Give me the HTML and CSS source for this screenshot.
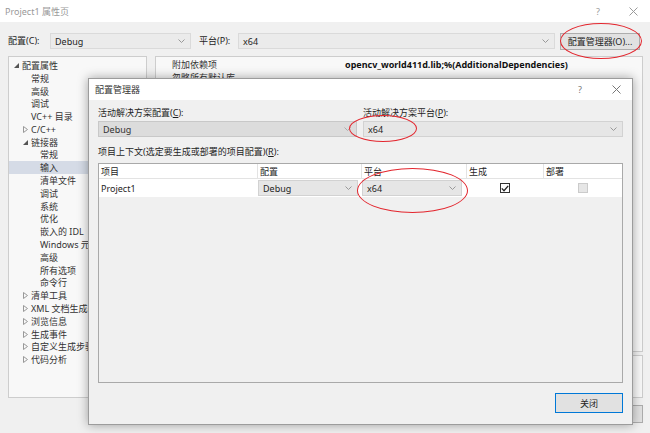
FILE: index.html
```html
<!doctype html>
<html lang="zh-CN">
<head>
  <meta charset="UTF-8">
  <title>Project1 属性页</title>
  <link rel="stylesheet" href="styles.css">
</head>
<body>
<div class="window">

  <div class="titlebar">
    <span class="title">Project1 属性页</span>
    <span class="tb-help">?</span>
    <span class="tb-close"><svg width="9" height="9" viewBox="0 0 9 9"><path d="M0.5 0.5 L8.5 8.5 M8.5 0.5 L0.5 8.5" stroke="#9a9a9a" stroke-width="1"/></svg></span>
  </div>

  <div class="toolbar">
    <span class="lbl lbl-cfg">配置(C):</span>
    <div class="combo combo-cfg"><span>Debug</span><svg width="7" height="4" viewBox="0 0 7 4"><path d="M0.5 0.5 L3.5 3.5 L6.5 0.5" fill="none" stroke="#999"/></svg></div>
    <span class="lbl lbl-plat">平台(P):</span>
    <div class="combo combo-plat"><span>x64</span><svg width="7" height="4" viewBox="0 0 7 4"><path d="M0.5 0.5 L3.5 3.5 L6.5 0.5" fill="none" stroke="#999"/></svg></div>
    <button class="btn btn-mgr">配置管理器(O)...</button>
  </div>

  <div class="main">
    <div class="tree">
      <div class="row l0"><span class="tw"><svg width="5" height="5" viewBox="0 0 5 5"><path d="M5 0 L5 5 L0 5Z" fill="#555"/></svg></span>配置属性</div>
      <div class="row l1"><span class="tw"></span>常规</div>
      <div class="row l1"><span class="tw"></span>高级</div>
      <div class="row l1"><span class="tw"></span>调试</div>
      <div class="row l1"><span class="tw"></span>VC++ 目录</div>
      <div class="row l1"><span class="tw"><svg width="5" height="7" viewBox="0 0 5 7"><path d="M0.5 0.5 L4.5 3.5 L0.5 6.5Z" fill="none" stroke="#999"/></svg></span>C/C++</div>
      <div class="row l1"><span class="tw"><svg width="5" height="5" viewBox="0 0 5 5"><path d="M5 0 L5 5 L0 5Z" fill="#555"/></svg></span>链接器</div>
      <div class="row l2"><span class="tw"></span>常规</div>
      <div class="row l2 selected"><span class="tw"></span>输入</div>
      <div class="row l2"><span class="tw"></span>清单文件</div>
      <div class="row l2"><span class="tw"></span>调试</div>
      <div class="row l2"><span class="tw"></span>系统</div>
      <div class="row l2"><span class="tw"></span>优化</div>
      <div class="row l2"><span class="tw"></span>嵌入的 IDL</div>
      <div class="row l2"><span class="tw"></span>Windows 元数据</div>
      <div class="row l2"><span class="tw"></span>高级</div>
      <div class="row l2"><span class="tw"></span>所有选项</div>
      <div class="row l2"><span class="tw"></span>命令行</div>
      <div class="row l1"><span class="tw"><svg width="5" height="7" viewBox="0 0 5 7"><path d="M0.5 0.5 L4.5 3.5 L0.5 6.5Z" fill="none" stroke="#999"/></svg></span>清单工具</div>
      <div class="row l1"><span class="tw"><svg width="5" height="7" viewBox="0 0 5 7"><path d="M0.5 0.5 L4.5 3.5 L0.5 6.5Z" fill="none" stroke="#999"/></svg></span>XML 文档生成器</div>
      <div class="row l1"><span class="tw"><svg width="5" height="7" viewBox="0 0 5 7"><path d="M0.5 0.5 L4.5 3.5 L0.5 6.5Z" fill="none" stroke="#999"/></svg></span>浏览信息</div>
      <div class="row l1"><span class="tw"><svg width="5" height="7" viewBox="0 0 5 7"><path d="M0.5 0.5 L4.5 3.5 L0.5 6.5Z" fill="none" stroke="#999"/></svg></span>生成事件</div>
      <div class="row l1"><span class="tw"><svg width="5" height="7" viewBox="0 0 5 7"><path d="M0.5 0.5 L4.5 3.5 L0.5 6.5Z" fill="none" stroke="#999"/></svg></span>自定义生成步骤</div>
      <div class="row l1"><span class="tw"><svg width="5" height="7" viewBox="0 0 5 7"><path d="M0.5 0.5 L4.5 3.5 L0.5 6.5Z" fill="none" stroke="#999"/></svg></span>代码分析</div>
    </div>

    <div class="right">
      <div class="props">
        <div class="prop"><span>附加依赖项</span><b>opencv_world411d.lib;%(AdditionalDependencies)</b></div>
        <div class="prop"><span>忽略所有默认库</span><span></span></div>
      </div>
      <div class="desc"></div>
    </div>
  </div>

  <div class="footer">
    <button class="btn">确定</button>
    <button class="btn">取消</button>
    <button class="btn">应用(A)</button>
  </div>

  <!-- 配置管理器 dialog -->
  <div class="dialog">
    <div class="dlg-title">
      <span class="title">配置管理器</span>
      <span class="tb-help">?</span>
      <span class="tb-close"><svg width="9" height="9" viewBox="0 0 9 9"><path d="M0.5 0.5 L8.5 8.5 M8.5 0.5 L0.5 8.5" stroke="#777" stroke-width="1"/></svg></span>
    </div>
    <div class="dlg-body">
      <div class="dlg-top">
        <div class="field">
          <span class="lbl">活动解决方案配置(<u>C</u>):</span>
          <div class="combo combo-disabled"><span>Debug</span><svg width="7" height="4" viewBox="0 0 7 4"><path d="M0.5 0.5 L3.5 3.5 L6.5 0.5" fill="none" stroke="#aaa"/></svg></div>
        </div>
        <div class="field">
          <span class="lbl">活动解决方案平台(<u>P</u>):</span>
          <div class="combo"><span>x64</span><svg width="7" height="4" viewBox="0 0 7 4"><path d="M0.5 0.5 L3.5 3.5 L6.5 0.5" fill="none" stroke="#999"/></svg></div>
        </div>
      </div>
      <span class="lbl ctx-lbl">项目上下文(选定要生成或部署的项目配置)(<u>R</u>):</span>
      <div class="grid">
        <div class="grid-row head">
          <div class="cell">项目</div>
          <div class="cell">配置</div>
          <div class="cell">平台</div>
          <div class="cell">生成</div>
          <div class="cell">部署</div>
        </div>
        <div class="grid-row data">
          <div class="cell">Project1</div>
          <div class="cell"><div class="combo"><span>Debug</span><svg width="7" height="4" viewBox="0 0 7 4"><path d="M0.5 0.5 L3.5 3.5 L6.5 0.5" fill="none" stroke="#999"/></svg></div></div>
          <div class="cell"><div class="combo"><span>x64</span><svg width="7" height="4" viewBox="0 0 7 4"><path d="M0.5 0.5 L3.5 3.5 L6.5 0.5" fill="none" stroke="#999"/></svg></div></div>
          <div class="cell center"><span class="check"><svg width="8" height="7" viewBox="0 0 8 7"><path d="M0.8 3.4 L3 5.7 L7.2 0.8" fill="none" stroke="#222" stroke-width="1.3"/></svg></span></div>
          <div class="cell center"><span class="check off"></span></div>
        </div>
      </div>
      <div class="dlg-foot">
        <button class="btn btn-close">关闭</button>
      </div>
    </div>
  </div>

  <!-- red annotation rings -->
  <span class="ring ring-mgr"></span>
  <span class="ring ring-plat"></span>
  <span class="ring ring-row"></span>

</div>
</body>
</html>
```

FILE: styles.css
```css
*
{
  margin: 0;
  padding: 0;
  box-sizing: border-box;
}
body
{
  width: 650px;
  height: 433px;
  overflow: hidden;
  background: #f0f0f0;
  font-family: "Noto Sans", "Noto Sans CJK SC", sans-serif;
  font-size: 9px;
  color: #1e1e1e;
}
.window
{
  position: relative;
  width: 650px;
  height: 433px;
  display: flex;
  flex-direction: column;
  background: #f0f0f0;
}
.titlebar
{
  height: 22px;
  flex: none;
  display: flex;
  align-items: center;
  padding: 0 10px 0 5px;
  background: #fff;
  color: #999;
}
.titlebar .title
{
  flex: 1;
}
.tb-help
{
  width: 12px;
  text-align: center;
  color: #999;
}
.tb-close
{
  width: 14px;
  margin-left: 22px;
  display: flex;
  justify-content: center;
}

/* toolbar */
.toolbar
{
  height: 34px;
  flex: none;
  display: flex;
  align-items: flex-start;
  padding: 11px 10px 0 8px;
}
.toolbar .lbl
{
  height: 16px;
  line-height: 16px;
}
.lbl-cfg
{
  width: 42px;
}
.lbl-plat
{
  width: 39px;
  margin-left: 8px;
}
.combo
{
  display: flex;
  align-items: center;
  justify-content: space-between;
  height: 16px;
  padding: 0 5px 0 4px;
  background: #e6e6e6;
  border: 1px solid #d2d2d2;
}
.combo-cfg
{
  width: 141px;
  background: #ebebeb;
  border-color: #dadada;
}
.combo-plat
{
  flex: 1;
  background: #ebebeb;
  border-color: #dadada;
}
.btn
{
  font: inherit;
  color: #1e1e1e;
  background: #e1e1e1;
  border: 1px solid #adadad;
}
.btn-mgr
{
  width: 80px;
  height: 17px;
  margin-left: 5px;
}

/* main area */
.main
{
  height: 342px;
  flex: none;
  display: flex;
  gap: 8px;
  padding: 0 7px 0 8px;
}
.tree
{
  width: 139px;
  padding-top: 2px;
  background: #f8f8f8;
  border: 1px solid #cdcdcd;
  overflow: hidden;
  white-space: nowrap;
}
.row
{
  display: flex;
  align-items: center;
  height: 12.8px;
  color: #333;
}
.row .tw
{
  width: 8px;
  flex: none;
  display: flex;
  align-items: center;
}
.l0
{
  padding-left: 5px;
}
.l1
{
  padding-left: 14px;
}
.l2
{
  padding-left: 23px;
}
.row.selected
{
  background: #d5dbe6;
}
.right
{
  flex: 1;
  display: flex;
  flex-direction: column;
  gap: 3px;
}
.props
{
  height: 296px;
  padding: 2px 0 0 16px;
  background: #f8f8f8;
  border: 1px solid #cdcdcd;
}
.prop
{
  display: grid;
  grid-template-columns: 173px 1fr;
  height: 12.8px;
  line-height: 12.8px;
  white-space: nowrap;
  color: #333;
}
.prop b
{
  color: #111;
}
.desc
{
  flex: 1;
  background: #f8f8f8;
  border: 1px solid #cdcdcd;
}
.footer
{
  display: flex;
  justify-content: flex-end;
  gap: 7px;
  padding: 7px 7px 0 0;
}
.footer .btn
{
  width: 70px;
  height: 18px;
}

/* dialog */
.dialog
{
  position: absolute;
  left: 88px;
  top: 78px;
  width: 545px;
  height: 347px;
  display: flex;
  flex-direction: column;
  background: #f0f0f0;
  border: 1px solid #9c9c9c;
  box-shadow: 0 0 10px rgba(0, 0, 0, 0.35);
  z-index: 10;
}
.dlg-title
{
  height: 21px;
  flex: none;
  display: flex;
  align-items: center;
  padding: 0 9px 0 6px;
  background: #fff;
  color: #333;
}
.dlg-title .title
{
  flex: 1;
}
.dlg-title .tb-help
{
  color: #777;
}
.dlg-title .tb-close
{
  margin-left: 23px;
}
.dlg-body
{
  flex: 1;
  display: flex;
  flex-direction: column;
  padding: 6px 9px 10px 9px;
}
.dlg-top
{
  display: grid;
  grid-template-columns: 259px 1fr;
  gap: 6px;
}
.field .lbl
{
  display: block;
  height: 13px;
  line-height: 13px;
}
.field .combo
{
  margin-top: 2px;
}
.combo-disabled
{
  background: #dcdcdc;
  border-color: #c8c8c8;
  color: #333;
}
.ctx-lbl
{
  display: block;
  margin-top: 8px;
  height: 13px;
  line-height: 13px;
}
.grid
{
  margin-top: 5px;
  height: 220px;
  background: #f0f0f0;
  border: 1px solid #a9a9a9;
}
.grid-row
{
  display: grid;
  grid-template-columns: 159px 104px 105px 77px 1fr;
  background: #fff;
}
.grid-row.head
{
  height: 15px;
  border-bottom: 1px solid #e3e3e3;
}
.grid-row.data
{
  height: 18px;
}
.cell
{
  display: flex;
  align-items: center;
  padding-left: 2px;
  border-right: 1px solid #e3e3e3;
  white-space: nowrap;
}
.cell:last-child
{
  border-right: none;
}
.grid-row.data .cell
{
  border-right-color: transparent;
}
.grid-row.data .combo
{
  width: 100px;
  margin-left: -2px;
}
.cell.center
{
  justify-content: center;
  padding-left: 0;
}
.check
{
  width: 10px;
  height: 10px;
  display: flex;
  align-items: center;
  justify-content: center;
  background: #fff;
  border: 1px solid #333;
}
.check.off
{
  background: #e6e6e6;
  border-color: #cbcbcb;
}
.dlg-foot
{
  display: flex;
  justify-content: flex-end;
  margin-top: 10px;
}
.btn-close
{
  width: 68px;
  height: 20px;
  border-color: #0078d7;
}

/* annotation rings */
.ring
{
  position: absolute;
  border: 1.5px solid #e3262e;
  border-radius: 50%;
  z-index: 20;
}
.ring-mgr
{
  left: 560px;
  top: 23px;
  width: 82px;
  height: 36px;
}
.ring-plat
{
  left: 349px;
  top: 115px;
  width: 68px;
  height: 27px;
}
.ring-row
{
  left: 357px;
  top: 168px;
  width: 111px;
  height: 45px;
}
```
